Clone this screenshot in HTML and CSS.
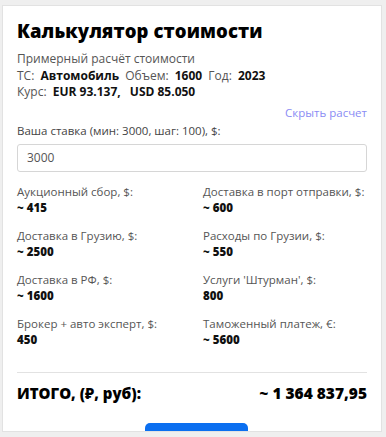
FILE: index.html
```html
<!DOCTYPE html>
<html lang="ru">
<head>
<meta charset="utf-8">
<link rel="stylesheet" href="styles.css">
</head>
<body>
<div class="card">
  <h1 class="title">Калькулятор стоимости</h1>
  <div class="info">
    <div>Примерный расчёт стоимости</div>
    <div>ТС: <b>Автомобиль</b> Объем: <b>1600</b> Год: <b>2023</b></div>
    <div>Курс: <b>EUR 93.137,</b> <b>USD 85.050</b></div>
  </div>
  <div class="toggle"><a class="link">Скрыть расчет</a></div>
  <label class="label">Ваша ставка (мин: 3000, шаг: 100), $:</label>
  <div class="input">3000</div>
  <div class="grid">
    <div class="item"><div class="k">Аукционный сбор, $:</div><div class="v">~ 415</div></div>
    <div class="item"><div class="k">Доставка в порт отправки, $:</div><div class="v">~ 600</div></div>
    <div class="item"><div class="k">Доставка в Грузию, $:</div><div class="v">~ 2500</div></div>
    <div class="item"><div class="k">Расходы по Грузии, $:</div><div class="v">~ 550</div></div>
    <div class="item"><div class="k">Доставка в РФ, $:</div><div class="v">~ 1600</div></div>
    <div class="item"><div class="k">Услуги 'Штурман', $:</div><div class="v">800</div></div>
    <div class="item"><div class="k">Брокер + авто эксперт, $:</div><div class="v">450</div></div>
    <div class="item"><div class="k">Таможенный платеж, €:</div><div class="v">~ 5600</div></div>
  </div>
  <div class="total">
    <span>ИТОГО, (₽, руб):</span>
    <span>~ 1 364 837,95</span>
  </div>
  <div class="actions"><button class="btn" aria-label="Рассчитать"></button></div>
</div>
</body>
</html>
```
FILE: styles.css
```css
* { box-sizing: border-box; }
html, body { margin: 0; }
body {
  background: #efefef;
  font-family: "Open Sans", "Noto Sans", sans-serif;
  color: #111;
  height: 437px;
  overflow: hidden;
  padding: 5px 4px 0 2px;
}
.card {
  background: #fff;
  border: 1px solid #e2e2e2;
  height: 427px;
  overflow: hidden;
  padding: 13px 14px 0 14px;
}
.title {
  margin: 0;
  font-size: 18.5px;
  font-weight: 800;
  line-height: 24px;
  color: #000;
  letter-spacing: 0.1px;
}
.info {
  margin-top: 8px;
  font-size: 12px;
  line-height: 16.5px;
  color: #555;
}
.info b { color: #111; font-weight: 700; margin: 0 3px; }
.toggle {
  display: flex;
  justify-content: flex-end;
  margin-top: 4px;
}
.link {
  font-size: 11.5px;
  line-height: 16px;
  color: #8a8cf4;
}
.label {
  display: block;
  margin-top: 1px;
  font-size: 11.5px;
  line-height: 17px;
  color: #444;
}
.input {
  margin-top: 5px;
  height: 28px;
  border: 1px solid #d6d6d6;
  border-radius: 3px;
  padding: 0 9px;
  font-size: 12px;
  line-height: 26px;
  color: #555;
}
.grid {
  display: grid;
  grid-template-columns: 186px 1fr;
  row-gap: 12px;
  margin-top: 12px;
}
.k {
  font-size: 11.5px;
  line-height: 16px;
  color: #555;
}
.v {
  font-size: 11.5px;
  line-height: 16px;
  font-weight: 800;
  color: #111;
}
.total {
  margin-top: 24px;
  border-top: 1px solid #e2e2e2;
  padding-top: 10px;
  display: flex;
  justify-content: space-between;
  font-size: 15px;
  font-weight: 800;
  line-height: 20px;
  color: #000;
}
.total span:last-child { font-size: 15.5px; }
.actions {
  display: flex;
  justify-content: center;
  margin-top: 20px;
  padding-left: 8px;
}
.btn {
  width: 103px;
  height: 36px;
  border: 0;
  border-radius: 5px;
  background: #0b6ff0;
  padding: 0;
}
```
